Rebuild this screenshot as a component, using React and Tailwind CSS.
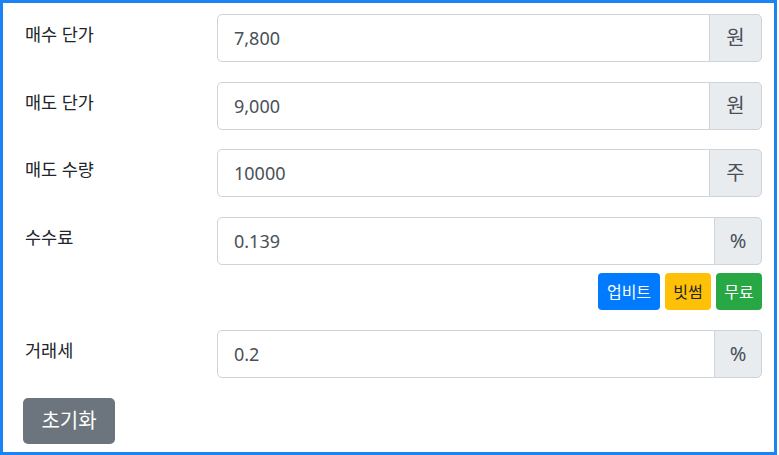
import React from "react";

const font = { fontFamily: '"Segoe UI", "Noto Sans", "Noto Sans CJK KR", sans-serif' };

function Row({ label, value, unit, addonW, children, mb = "mb-[20px]" }) {
  return (
    <div className={mb}>
      <div className="flex items-start">
        <label className="w-[192px] shrink-0 pt-[8px] text-[17.5px] leading-[24px] text-[#212529]">{label}</label>
        <div className="flex flex-1 h-[48px]">
          <input
            readOnly
            value={value}
            className="flex-1 min-w-0 h-[48px] border border-[#ced4da] rounded-l-[5px] bg-white pl-[16px] text-[18px] text-[#495057] outline-none"
            style={font}
          />
          <div
            className={`${addonW} h-[48px] -ml-px flex items-center justify-center border border-[#ced4da] rounded-r-[5px] bg-[#e9ecef] text-[20px] text-[#495057]`}
          >
            {unit}
          </div>
        </div>
      </div>
      {children}
    </div>
  );
}

export default function App() {
  return (
    <div
      className="w-[777px] h-[455px] border-[3px] border-[#1b84f2] bg-white pl-[22px] pr-[12px] pt-[11px]"
      style={font}
    >
      <Row label="매수 단가" value="7,800" unit="원" addonW="w-[53px]" />
      <Row label="매도 단가" value="9,000" unit="원" addonW="w-[53px]" mb="mb-[19px]" />
      <Row label="매도 수량" value="10000" unit="주" addonW="w-[53px]" mb="mb-[20px]" />
      <Row label="수수료" value="0.139" unit="%" addonW="w-[48px]" mb="mb-[20px]">
        <div className="flex justify-end gap-[5px] mt-[8px]">
          <button className="h-[37px] w-[62px] rounded-[4px] bg-[#007bff] text-white text-[16px]">업비트</button>
          <button className="h-[37px] w-[46px] rounded-[4px] bg-[#ffc107] text-[#212529] text-[16px]">빗썸</button>
          <button className="h-[37px] w-[46px] rounded-[4px] bg-[#28a745] text-white text-[16px]">무료</button>
        </div>
      </Row>
      <Row label="거래세" value="0.2" unit="%" addonW="w-[48px]" mb="mb-[20px]" />
      <button className="h-[46px] w-[92px] -ml-[2px] rounded-[5px] bg-[#6c757d] text-white text-[20px]">초기화</button>
    </div>
  );
}
